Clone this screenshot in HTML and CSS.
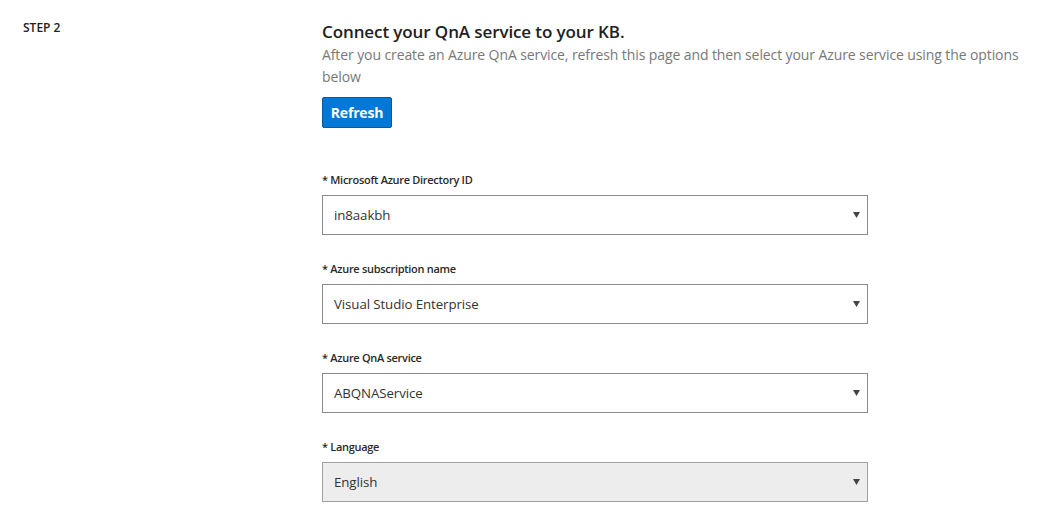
FILE: index.html
```html
<!DOCTYPE html>
<html>
<head>
<meta charset="utf-8">
<link rel="stylesheet" href="styles.css">
</head>
<body>
<div class="page">
  <div class="step">STEP 2</div>
  <div class="content">
    <h2 class="title">Connect your QnA service to your KB.</h2>
    <p class="desc">After you create an Azure QnA service, refresh this page and then select your Azure service using the options below</p>
    <button class="btn">Refresh</button>
    <div class="fields">
      <div class="field">
        <div class="label">* Microsoft Azure Directory ID</div>
        <div class="select"><span>in8aakbh</span><svg class="caret" width="7" height="6" viewBox="0 0 7 6"><path d="M0 0H7L3.5 6Z" fill="#444"/></svg></div>
      </div>
      <div class="field">
        <div class="label">* Azure subscription name</div>
        <div class="select"><span>Visual Studio Enterprise</span><svg class="caret" width="7" height="6" viewBox="0 0 7 6"><path d="M0 0H7L3.5 6Z" fill="#444"/></svg></div>
      </div>
      <div class="field">
        <div class="label">* Azure QnA service</div>
        <div class="select"><span>ABQNAService</span><svg class="caret" width="7" height="6" viewBox="0 0 7 6"><path d="M0 0H7L3.5 6Z" fill="#444"/></svg></div>
      </div>
      <div class="field">
        <div class="label">* Language</div>
        <div class="select disabled"><span>English</span><svg class="caret" width="7" height="6" viewBox="0 0 7 6"><path d="M0 0H7L3.5 6Z" fill="#444"/></svg></div>
      </div>
    </div>
  </div>
</div>
</body>
</html>
```
FILE: styles.css
```css
html, body {
  margin: 0;
  padding: 0;
  background: #fff;
}
body {
  font-family: "Open Sans", "Noto Sans", sans-serif;
  color: #333;
}
.page {
  display: flex;
  padding-top: 20px;
}
.step {
  width: 299px;
  padding-left: 23px;
  font-size: 12px;
  font-weight: 600;
  color: #222;
  line-height: 16px;
  flex-shrink: 0;
}
.content {
  width: 704px;
}
.title {
  margin: 0;
  font-size: 17px;
  font-weight: 600;
  color: #212121;
  line-height: 24px;
  letter-spacing: -0.1px;
}
.desc {
  margin: 0;
  font-size: 14px;
  color: #787878;
  line-height: 22px;
  letter-spacing: -0.1px;
}
.btn {
  display: block;
  margin-top: 9px;
  width: 70px;
  height: 31px;
  padding: 0;
  background: #0078d7;
  border: 1px solid #005ba1;
  border-radius: 2px;
  color: #fff;
  font-family: inherit;
  font-size: 14px;
  font-weight: 700;
  letter-spacing: -0.2px;
}
.fields {
  margin-top: 44px;
  display: flex;
  flex-direction: column;
  gap: 26px;
  width: 546px;
}
.label {
  font-size: 11px;
  font-weight: 600;
  color: #2a2a2a;
  line-height: 16px;
  margin-bottom: 7px;
  letter-spacing: -0.3px;
}
.select {
  box-sizing: border-box;
  height: 40px;
  border: 1px solid #8a8a8a;
  display: flex;
  align-items: center;
  justify-content: space-between;
  padding: 0 7px 0 11px;
  font-size: 13.3px;
  color: #333;
  letter-spacing: -0.1px;
}
.select.disabled {
  background: #ededed;
  border-color: #a0a0a0;
}
.caret {
  display: block;
}
```
